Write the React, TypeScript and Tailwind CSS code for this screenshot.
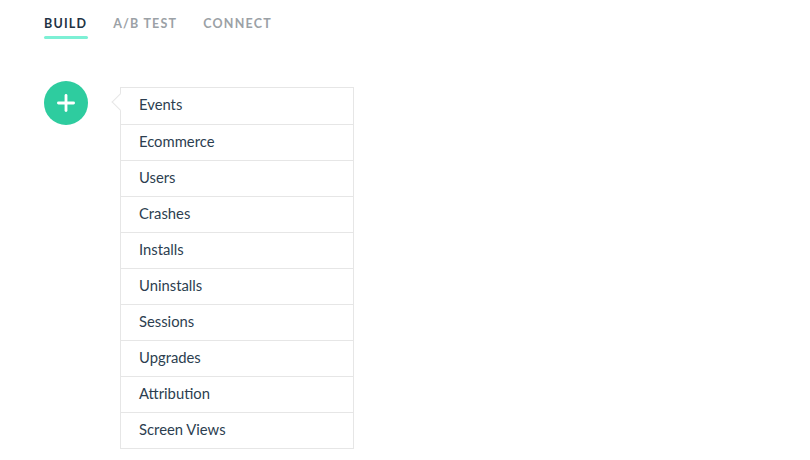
import { Plus } from "lucide-react";

export default function App() {
  const tabs = [
    { label: "BUILD", active: true },
    { label: "A/B TEST", active: false },
    { label: "CONNECT", active: false },
  ];

  const items = [
    "Events",
    "Ecommerce",
    "Users",
    "Crashes",
    "Installs",
    "Uninstalls",
    "Sessions",
    "Upgrades",
    "Attribution",
    "Screen Views",
  ];

  return (
    <div className="w-[810px] h-[460px] bg-white font-['Lato',sans-serif] text-[#2c3e50]">
      <div className="flex gap-[26px] pl-[44px] pt-[16px]">
        {tabs.map((tab) => (
          <div key={tab.label} className="flex flex-col">
            <span
              className={`text-[12.5px] font-bold tracking-[1.2px] leading-[16px] ${
                tab.active ? "text-[#1f3344]" : "text-[#9ba1a6]"
              }`}
            >
              {tab.label}
            </span>
            {tab.active && <div className="mt-[4px] h-[3px] mr-[-1px] bg-[#7df0d5] rounded-full" />}
          </div>
        ))}
      </div>

      <div className="flex items-start pl-[44px] pt-[48px]">
        <button className="w-[44px] h-[44px] mt-[-6px] rounded-full bg-[#2ecc9f] flex items-center justify-center text-white">
          <Plus size={26} strokeWidth={2.6} />
        </button>

        <div className="relative ml-[32px] w-[234px] border border-[#e6e6e6] bg-white">
          <div className="absolute left-[-7px] top-[8px] w-[12px] h-[12px] rotate-45 bg-white border-l border-b border-[#e6e6e6]" />
          {items.map((item, i) => (
            <div
              key={item}
              className={`relative h-[36px] flex items-center pl-[18px] text-[14.8px] ${
                i > 0 ? "border-t border-[#e6e6e6] pb-[3px]" : "pb-[4px]"
              }`}
            >
              {item}
            </div>
          ))}
        </div>
      </div>
    </div>
  );
}
